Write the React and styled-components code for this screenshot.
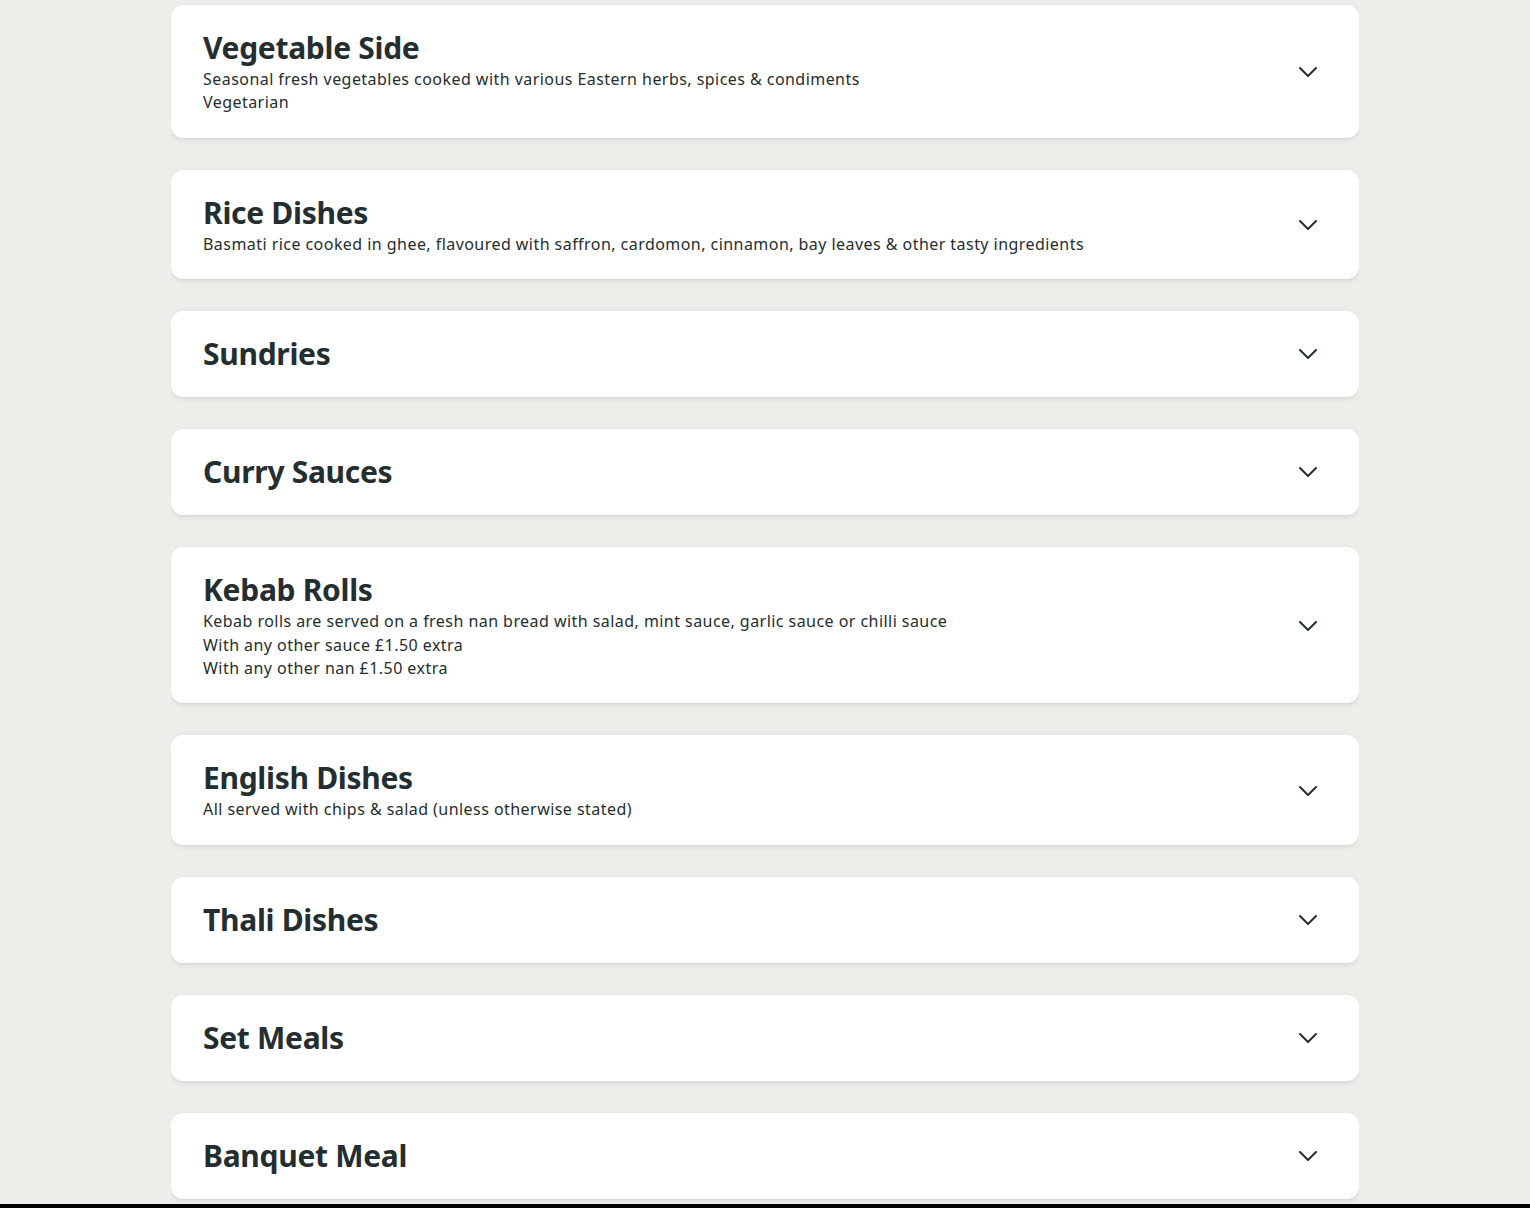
import React from "react";
import styled, { createGlobalStyle } from "styled-components";

const GlobalStyle = createGlobalStyle`
  html, body {
    margin: 0;
    padding: 0;
    background: #efedea;
    font-family: "Noto Sans", "Liberation Sans", sans-serif;
    color: #242e30;
  }
`;

const categories = [
  {
    title: "Vegetable Side",
    lines: [
      "Seasonal fresh vegetables cooked with various Eastern herbs, spices & condiments",
      "Vegetarian",
    ],
  },
  {
    title: "Rice Dishes",
    lines: [
      "Basmati rice cooked in ghee, flavoured with saffron, cardomon, cinnamon, bay leaves & other tasty ingredients",
    ],
  },
  { title: "Sundries", lines: [] },
  { title: "Curry Sauces", lines: [] },
  {
    title: "Kebab Rolls",
    lines: [
      "Kebab rolls are served on a fresh nan bread with salad, mint sauce, garlic sauce or chilli sauce",
      "With any other sauce £1.50 extra",
      "With any other nan £1.50 extra",
    ],
  },
  {
    title: "English Dishes",
    lines: ["All served with chips & salad (unless otherwise stated)"],
  },
  { title: "Thali Dishes", lines: [] },
  { title: "Set Meals", lines: [] },
  { title: "Banquet Meal", lines: [] },
];

const Chevron = () => (
  <svg width="18" height="10" viewBox="0 0 18 10" fill="none">
    <path
      d="M1 1l8 8 8-8"
      stroke="#242e30"
      strokeWidth="2"
      strokeLinecap="round"
      strokeLinejoin="round"
    />
  </svg>
);

const App = () => {
  return (
    <>
      <GlobalStyle />
      <Page>
        <List>
          {categories.map((c) => {
            const hasLines = c.lines.length > 0;
            return (
              <Card key={c.title} $hasLines={hasLines}>
                <Text>
                  <Title $hasLines={hasLines}>{c.title}</Title>
                  {c.lines.map((l) => (
                    <Line key={l}>{l}</Line>
                  ))}
                </Text>
                <Toggle>
                  <Chevron />
                </Toggle>
              </Card>
            );
          })}
        </List>
        <BottomBar />
      </Page>
    </>
  );
};

export default App;

const Page = styled.div`
  height: 1208px;
  overflow: hidden;
  display: flex;
  flex-direction: column;
`;
const List = styled.div`
  flex: 1;
  width: 1188px;
  margin: 0 auto;
  padding-top: 5px;
  display: flex;
  flex-direction: column;
  gap: 32px;
  overflow: hidden;
`;
const Card = styled.div`
  flex-shrink: 0;
  background: #fff;
  border-radius: 12px;
  box-shadow: 0 2px 6px rgba(0, 0, 0, 0.08), 0 1px 2px rgba(0, 0, 0, 0.04);
  padding: 24px 33px ${(p) => (p.$hasLines ? "23px" : "24px")} 32px;
  display: flex;
  align-items: center;
  justify-content: space-between;
`;
const Text = styled.div`
  display: flex;
  flex-direction: column;
`;
const Title = styled.h2`
  margin: 0 0 ${(p) => (p.$hasLines ? "1px" : "0")};
  font-size: 30px;
  line-height: 38px;
  font-weight: 700;
  letter-spacing: -0.3px;
`;
const Line = styled.p`
  margin: 0;
  font-size: 16px;
  line-height: 23.4px;
  letter-spacing: 0.45px;
`;
const Toggle = styled.div`
  width: 36px;
  height: 24px;
  display: flex;
  align-items: center;
  justify-content: center;
`;
const BottomBar = styled.div`
  height: 4px;
  background: #000;
  flex-shrink: 0;
`;
